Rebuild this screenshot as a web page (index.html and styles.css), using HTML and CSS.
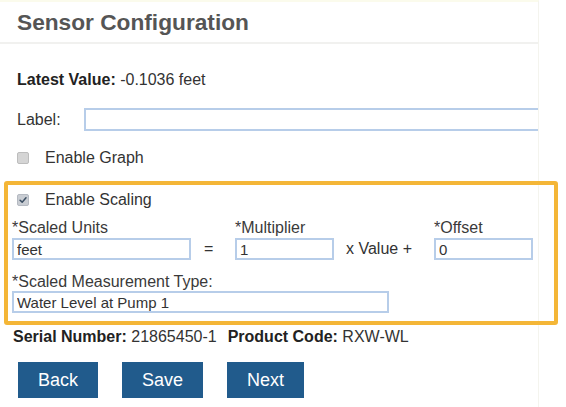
FILE: index.html
```html
<!DOCTYPE html>
<html>
<head>
<meta charset="utf-8">
<link rel="stylesheet" href="styles.css">
</head>
<body>
<div class="panel">
  <div class="header"><h1 class="title">Sensor Configuration</h1></div>
  <div class="latest"><b>Latest Value:</b> -0.1036 feet</div>
  <div class="label-row">
    <span class="label-text">Label:</span>
    <input class="input label-input" type="text" value="">
  </div>
  <div class="check-row">
    <span class="box"></span>
    <span class="check-text">Enable Graph</span>
  </div>
  <div class="scaling">
    <div class="check-row inner">
      <span class="box checked"><svg width="12" height="12" viewBox="0 0 12 12"><path d="M2.5 6.3 L5 8.6 L9.6 3.4" fill="none" stroke="#3b4f63" stroke-width="1.8" stroke-linecap="round" stroke-linejoin="round"/></svg></span>
      <span class="check-text">Enable Scaling</span>
    </div>
    <div class="formula">
      <div class="field units">
        <div class="field-label">*Scaled Units</div>
        <input class="input" type="text" value="feet">
      </div>
      <div class="op eq">=</div>
      <div class="field mult">
        <div class="field-label">*Multiplier</div>
        <input class="input" type="text" value="1">
      </div>
      <div class="op xv">x Value +</div>
      <div class="field offset">
        <div class="field-label">*Offset</div>
        <input class="input" type="text" value="0">
      </div>
    </div>
    <div class="field measure">
      <div class="field-label">*Scaled Measurement Type:</div>
      <input class="input" type="text" value="Water Level at Pump 1">
    </div>
  </div>
  <div class="serial"><b>Serial Number:</b> 21865450-1<span class="pc"><b>Product Code:</b> RXW-WL</span></div>
  <div class="buttons">
    <button class="btn">Back</button>
    <button class="btn">Save</button>
    <button class="btn">Next</button>
  </div>
</div>
</body>
</html>
```
FILE: styles.css
```css
html, body {
  margin: 0;
  padding: 0;
  background: #ffffff;
}
body {
  font-family: "Liberation Sans", Arial, sans-serif;
  font-size: 16px;
  color: #333333;
  width: 566px;
  height: 407px;
  overflow: hidden;
}
.panel {
  width: 538px;
  border-top: 2px solid #fbfbec;
  border-right: 1px solid #f4f4ee;
  min-height: 405px;
}
.header {
  padding: 7px 0 7px 17px;
  border-bottom: 2px solid #f1f1ef;
}
.title {
  margin: 0;
  font-size: 22.7px;
  line-height: 26px;
  font-weight: bold;
  color: #555555;
}
.latest {
  margin-top: 26px;
  padding-left: 17px;
  line-height: 20px;
  color: #333;
}
.latest b {
  color: #222;
}
.label-row {
  margin-top: 18px;
  padding-left: 17px;
  display: flex;
  align-items: center;
  height: 23px;
}
.label-text {
  width: 67px;
  color: #333;
}
.input {
  box-sizing: border-box;
  height: 22px;
  border: 2px solid #b7cde9;
  border-radius: 0;
  padding: 0 3px;
  font-family: "Liberation Sans", Arial, sans-serif;
  font-size: 15px;
  color: #333;
  background: #fff;
  outline: none;
  margin: 0;
}
.label-input {
  flex: 1;
  height: 23px;
  border-right: none;
}
.check-row {
  margin-top: 17px;
  padding-left: 17px;
  display: flex;
  align-items: center;
  height: 20px;
}
.box {
  box-sizing: border-box;
  width: 12px;
  height: 12px;
  border: 1px solid #bdbdbd;
  background: #d5d5d5;
  border-radius: 2px;
  display: inline-flex;
  align-items: center;
  justify-content: center;
}
.box.checked {
  background: #c9cdd3;
  border-color: #b5bac2;
}
.box svg {
  display: block;
}
.check-text {
  margin-left: 16px;
  color: #333;
}
.scaling {
  margin-top: 13px;
  margin-left: 4px;
  width: 554px;
  box-sizing: border-box;
  border: 4px solid #f4b637;
  border-radius: 3px;
  padding: 5px 0 8px 4px;
  position: relative;
}
.check-row.inner {
  margin-top: 0;
  padding-left: 5px;
}
.formula {
  display: flex;
  align-items: flex-end;
  margin-top: 8px;
}
.field-label {
  line-height: 20px;
  color: #3a3a3a;
}
.field .input {
  display: block;
  width: 100%;
}
.units { width: 179px; }
.mult { width: 99px; }
.offset { width: 99px; }
.op {
  line-height: 22px;
  height: 22px;
  color: #333;
}
.eq {
  width: 44px;
  padding-left: 13px;
  box-sizing: border-box;
}
.xv {
  width: 100px;
  padding-left: 12px;
  box-sizing: border-box;
}
.measure {
  width: 377px;
  margin-top: 12px;
}
.measure .field-label {
  line-height: 19px;
}
.serial {
  margin-top: 2px;
  padding-left: 13px;
  line-height: 20px;
  color: #333;
}
.serial b {
  color: #222;
}
.pc {
  margin-left: 11px;
}
.buttons {
  margin-top: 15px;
  padding-left: 18px;
  display: flex;
  gap: 24px;
}
.btn {
  height: 36px;
  padding: 0 20px;
  border: none;
  border-radius: 0;
  background: #215b8c;
  color: #ffffff;
  font-family: "Liberation Sans", Arial, sans-serif;
  font-size: 18px;
  line-height: 36px;
  cursor: pointer;
}
```
